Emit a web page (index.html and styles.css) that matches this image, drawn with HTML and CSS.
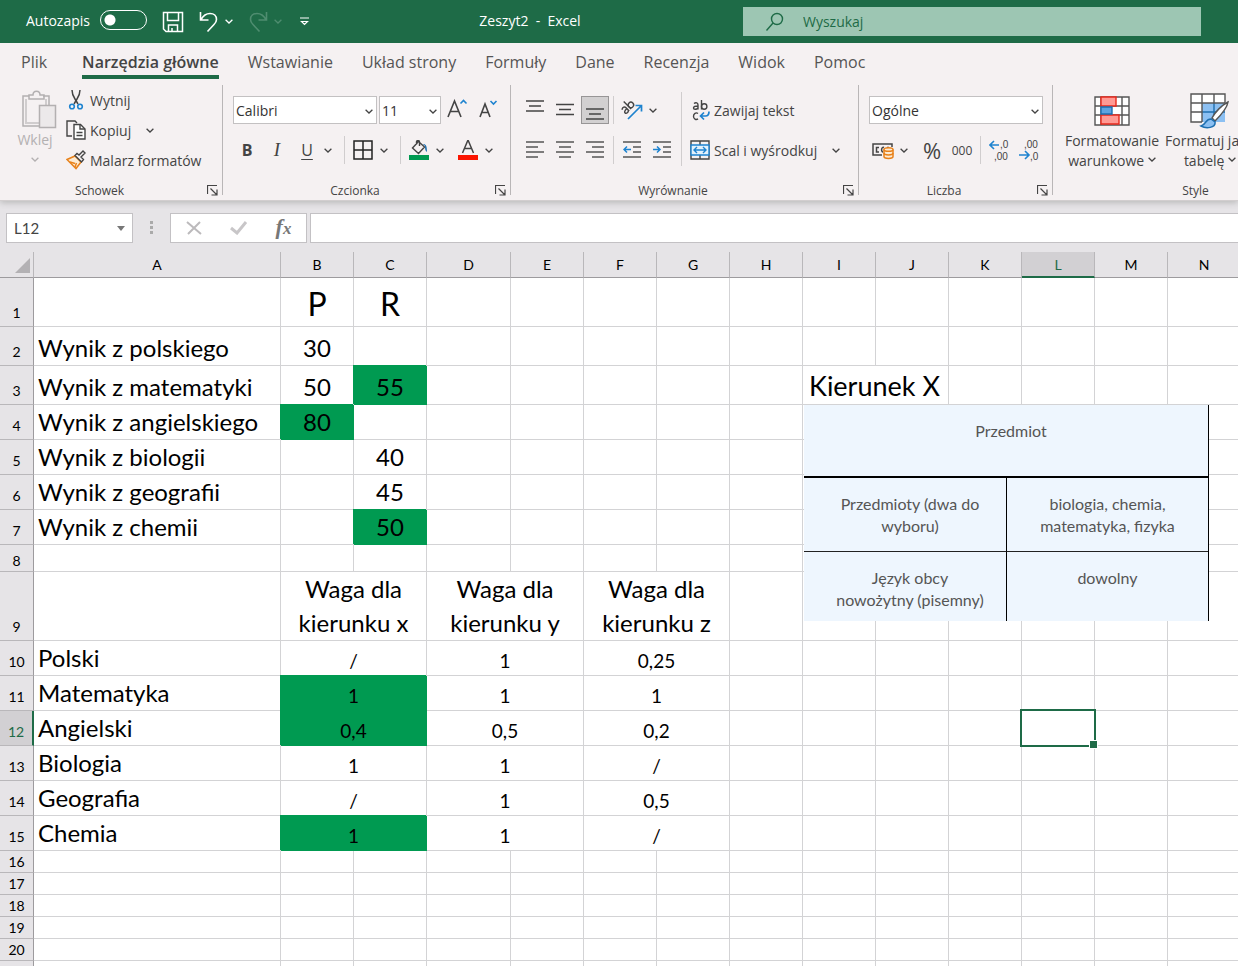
FILE: index.html
```html
<!DOCTYPE html>
<html lang="pl">
<head>
	<meta charset="UTF-8">
	<meta name="viewport" content="width=device-width, initial-scale=1.0">
	<title>Zeszyt2 - Excel</title>
	<link rel="stylesheet" href="styles.css">
</head>
<body>
	<svg class="symbols" aria-hidden="true">
		<symbol id="chevron" viewBox="0 0 8 5"><path d="M.6.8 4 4 7.4.8" fill="none" stroke="currentColor" stroke-width="1.3"/></symbol>
		<symbol id="launcher" viewBox="0 0 11 11"><path d="M.5 9V.5H10M3.5 3.5l6 6M10 4.500V10H4.500" fill="none" stroke="currentColor" stroke-width="1.2"/></symbol>
	</svg>

	<header class="titlebar">
		<div class="quick">
			<label class="autosave">Autozapis <input type="checkbox" class="autosave__switch"></label>
			<button class="quick__btn quick__btn--save" aria-label="Zapisz">
				<svg width="22" height="22" viewBox="0 0 22 22" fill="none" stroke="currentColor" stroke-width="1.5"><path d="M1.500 1.500h19v19H4l-2.500-2.500zM5.500 1.500v8h11v-8M6.500 20v-6h9v6M10 20v-3"/></svg>
			</button>
			<button class="quick__btn" aria-label="Cofnij">
				<svg width="20" height="22" viewBox="0 0 20 22" fill="none" stroke="currentColor" stroke-width="1.600"><path d="M1.500 1v8h8M2 8.500C4 5 7 2.500 11 2.500c4 0 6.500 2.500 6.500 6 0 2.500-1 3.500-2.500 5L8.500 20.500"/></svg>
			</button>
			<button class="chev" aria-label="Lista cofania"><svg><use href="#chevron"/></svg></button>
			<button class="quick__btn quick__btn--off" aria-label="Wykonaj ponownie">
				<svg width="20" height="22" viewBox="0 0 20 22" fill="none" stroke="currentColor" stroke-width="1.600"><path d="M18.500 1v8h-8M18 8.500C16 5 13 2.500 9 2.500c-4 0-6.500 2.500-6.500 6 0 2.500 1 3.500 2.500 5l6.500 7"/></svg>
			</button>
			<button class="chev quick__btn--off" aria-label="Lista ponawiania"><svg><use href="#chevron"/></svg></button>
			<button class="quick__more" aria-label="Dostosuj pasek">
				<svg width="9" height="9" viewBox="0 0 9 9" fill="none" stroke="currentColor" stroke-width="1.200"><path d="M0 1h9M1.500 4.500h6L4.500 7.500z"/></svg>
			</button>
		</div>
		<div class="titlebar__name">Zeszyt2&nbsp; -&nbsp; Excel</div>
		<label class="search">
			<svg width="20" height="20" viewBox="0 0 20 20" fill="none" stroke="currentColor" stroke-width="1.400"><circle cx="12" cy="7" r="5.500"/><path d="M8 11 1.500 18.500"/></svg>
			<input type="text" placeholder="Wyszukaj" aria-label="Wyszukaj">
		</label>
	</header>

	<nav class="tabs">
		<a href="#" class="tab tab--file">Plik</a>
		<a href="#" class="tab tab--active">Narzędzia główne</a>
		<a href="#" class="tab">Wstawianie</a>
		<a href="#" class="tab">Układ strony</a>
		<a href="#" class="tab">Formuły</a>
		<a href="#" class="tab">Dane</a>
		<a href="#" class="tab">Recenzja</a>
		<a href="#" class="tab">Widok</a>
		<a href="#" class="tab">Pomoc</a>
	</nav>

	<div class="ribbon">
		<section class="group group--clipboard">
			<div class="group__body group__body--clipboard">
				<button class="paste">
					<svg class="paste__icon" width="36" height="40" viewBox="0 0 36 40" fill="none" stroke="#b3b0b1" stroke-width="1.500"><path d="M8 6H2v30h16M22 6h6v9"/><path d="M5 9v24h13M25 9v6" stroke="#d0cdce" stroke-width="2"/><path d="M8 9V5h4c0-5 7-5 7 0h4v4z"/><path d="M18.500 15.500h16v22h-16z" fill="#ece9ea"/></svg>
					<span>Wklej</span>
					<svg class="paste__chev"><use href="#chevron"/></svg>
				</button>
				<div class="clipboard">
					<button class="cmd">
						<svg width="20" height="20" viewBox="0 0 20 20" fill="none"><path d="M6 0c0 4 1 6 3 9l3 5M14 0c0 4-1 6-3 9l-3 5" stroke="#444" stroke-width="1.500"/><circle cx="6" cy="16.500" r="2.300" stroke="#1e83cf" stroke-width="1.600"/><circle cx="14" cy="16.500" r="2.300" stroke="#1e83cf" stroke-width="1.600"/></svg>
						Wytnij
					</button>
					<span class="cmdrow">
						<button class="cmd">
							<svg width="20" height="20" viewBox="0 0 20 20" fill="none" stroke="#444" stroke-width="1.400"><path d="M6 16H1V1h8l2 2"/><path d="M8 4.500h6.500l4.500 4.500v10H8z" fill="#fff"/><path d="M14 4.500V9h5M10.500 12.500h6M10.500 15.500h6"/></svg>
							Kopiuj
						</button>
						<button class="chev" aria-label="Opcje kopiowania"><svg><use href="#chevron"/></svg></button>
					</span>
					<button class="cmd">
						<svg width="20" height="20" viewBox="0 0 20 20" fill="none"><path d="M1 9.500 9 6l6 6-5 6.500z" fill="#fdebd3" stroke="#e8811a" stroke-width="1.500"/><path d="m4 12 5 1.500M9 17l1.500-4" stroke="#e8811a" stroke-width="1.500"/><path d="m9 5.500 6.500 6.500 2-2.500-2.500-2.500 4-4L17 1l-4 4-2-1.500z" fill="#f5f1f2" stroke="#444" stroke-width="1.400"/></svg>
						Malarz formatów
					</button>
				</div>
			</div>
			<div class="group__foot"><span>Schowek</span><button class="launch" aria-label="Okno Schowek"><svg><use href="#launcher"/></svg></button></div>
		</section>

		<section class="group group--font">
			<div class="group__body">
				<div class="row">
					<span class="combo combo--font"><select aria-label="Czcionka"><option>Calibri</option></select><svg><use href="#chevron"/></svg></span>
					<span class="combo combo--size"><select aria-label="Rozmiar czcionki"><option>11</option></select><svg><use href="#chevron"/></svg></span>
					<button class="btn" aria-label="Zwiększ rozmiar"><svg width="22" height="22" viewBox="0 0 22 22" fill="none" stroke="#444" stroke-width="1.600"><path d="M2 18 8.500 2 15 18M4.500 12.500h8"/><path d="m14.500 4.500 3-3 3 3" stroke="#1e83cf"/></svg></button>
					<button class="btn" aria-label="Zmniejsz rozmiar"><svg width="22" height="22" viewBox="0 0 22 22" fill="none" stroke="#444" stroke-width="1.600"><path d="M4 18 9 5l5 13M6 13.500h6"/><path d="m14.500 2 3 3 3-3" stroke="#1e83cf"/></svg></button>
				</div>
				<div class="row">
					<button class="btn btn--b">B</button>
					<button class="btn btn--i">I</button>
					<span class="split"><button class="btn btn--u">U</button><button class="chev" aria-label="Podkreślenie"><svg><use href="#chevron"/></svg></button></span>
					<i class="sep"></i>
					<span class="split"><button class="btn" aria-label="Obramowanie"><svg width="20" height="20" viewBox="0 0 20 20" fill="none" stroke="#222" stroke-width="1.500"><path d="M1 1h18v18H1zM10 1v18M1 10h18"/></svg></button><button class="chev" aria-label="Rodzaj obramowania"><svg><use href="#chevron"/></svg></button></span>
					<i class="sep"></i>
					<span class="split"><button class="btn" aria-label="Kolor wypełnienia"><svg width="20" height="20" viewBox="0 0 20 20" fill="none"><path d="m9.500 1.500 6 5.500-6 6.500-6-5.500zM7.500 4.500V2c0-2 3-2 3 0v4" stroke="#444" stroke-width="1.400"/><path d="M14 4c3 0 4 2 4 8-2-1-2-4-2-6z" fill="#1e6fb0"/><path d="M0 15h20v5H0z" fill="#009a51"/></svg></button><button class="chev" aria-label="Lista kolorów wypełnienia"><svg><use href="#chevron"/></svg></button></span>
					<span class="split"><button class="btn" aria-label="Kolor czcionki"><svg width="20" height="20" viewBox="0 0 20 20" fill="none"><path d="M4.500 13 10 0l5.500 13M6.500 8.500h7" stroke="#444" stroke-width="1.500"/><path d="M0 15h20v5H0z" fill="#fb1400"/></svg></button><button class="chev" aria-label="Lista kolorów czcionki"><svg><use href="#chevron"/></svg></button></span>
				</div>
			</div>
			<div class="group__foot"><span>Czcionka</span><button class="launch" aria-label="Okno Czcionka"><svg><use href="#launcher"/></svg></button></div>
		</section>

		<section class="group group--align">
			<div class="group__body group__body--cols">
				<div class="col">
					<div class="row">
						<button class="btn" aria-label="Do góry"><svg width="18" height="20" viewBox="0 0 18 20" stroke="#444" stroke-width="1.500"><path d="M0 1h18M3 6h12M0 11h18"/></svg></button>
						<button class="btn" aria-label="Do środka"><svg width="18" height="20" viewBox="0 0 18 20" stroke="#444" stroke-width="1.500"><path d="M0 4.500h18M3 9.500h12M0 14.500h18"/></svg></button>
						<button class="btn btn--on" aria-label="Do dołu"><svg width="18" height="20" viewBox="0 0 18 20" stroke="#444" stroke-width="1.500"><path d="M0 9h18M3 14h12M0 19h18"/></svg></button>
						<i class="sep"></i>
						<span class="split"><button class="btn" aria-label="Orientacja"><svg width="22" height="22" viewBox="0 0 22 22" fill="none"><g transform="rotate(-45 8 10)" stroke="#444" stroke-width="1.400"><path d="M2.500 5.500C5 4 6.800 5 6.800 7v4.500M6.800 8C4 8 2.500 8.500 2.500 10s3 2.500 4.300 0M9.500 1v10.500"/><circle cx="12.200" cy="8.500" r="2.700"/></g><path d="M7 20 20 7M14.500 6.500H20.500V12.500" stroke="#1e83cf" stroke-width="1.700"/></svg></button><button class="chev" aria-label="Lista orientacji"><svg><use href="#chevron"/></svg></button></span>
					</div>
					<div class="row">
						<button class="btn" aria-label="Do lewej"><svg width="18" height="20" viewBox="0 0 18 20" stroke="#555" stroke-width="1.500"><path d="M0 2h18M0 7h12M0 12h18M0 17h12"/></svg></button>
						<button class="btn" aria-label="Wyśrodkuj"><svg width="18" height="20" viewBox="0 0 18 20" stroke="#555" stroke-width="1.500"><path d="M0 2h18M3 7h12M0 12h18M3 17h12"/></svg></button>
						<button class="btn" aria-label="Do prawej"><svg width="18" height="20" viewBox="0 0 18 20" stroke="#555" stroke-width="1.500"><path d="M0 2h18M6 7h12M0 12h18M6 17h12"/></svg></button>
						<i class="sep"></i>
						<button class="btn" aria-label="Zmniejsz wcięcie"><svg width="18" height="20" viewBox="0 0 18 20" fill="none" stroke="#555" stroke-width="1.500"><path d="M0 2h18M10 7h8M10 12h8M0 17h18"/><path d="M8 9.500H1M4 6.500l-3 3 3 3" stroke="#1e83cf"/></svg></button>
						<button class="btn" aria-label="Zwiększ wcięcie"><svg width="18" height="20" viewBox="0 0 18 20" fill="none" stroke="#555" stroke-width="1.500"><path d="M0 2h18M10 7h8M10 12h8M0 17h18"/><path d="M0 9.500h7M4 6.500l3 3-3 3" stroke="#1e83cf"/></svg></button>
					</div>
				</div>
				<i class="sep sep--tall"></i>
				<div class="col">
					<div class="row">
						<button class="cmd">
							<svg width="20" height="22" viewBox="0 0 20 22" fill="none" stroke="#444" stroke-width="1.400"><path d="M4 4.500c2-1.500 4-.5 4 1.500v4.500M8 7c-3 0-4.500.5-4.500 2S6.500 11 8 9M11.500 1v9.500"/><circle cx="14.200" cy="7.500" r="2.700"/><path d="M8 14.500c-2-1.500-4.500 0-4.500 2.700s2.500 4.200 4.500 2.700"/><path d="M19 12.500c0 3-1 4.500-3.500 4.500H11M14 13.500 10.500 17l3.500 3.500" stroke="#1e83cf" stroke-width="1.700"/></svg>
							Zawijaj tekst
						</button>
					</div>
					<div class="row">
						<button class="cmd">
							<svg width="20" height="20" viewBox="0 0 20 20" fill="none" stroke="#444" stroke-width="1.400"><path d="M1 1h18v18H1zM10 1v4M10 15v4"/><path d="M1 5h18v10H1z" fill="#e3f1fc" stroke="#1e83cf"/><path d="M4 10h12M7 7l-3 3 3 3M13 7l3 3-3 3" stroke="#1e83cf"/></svg>
							Scal i wyśrodkuj
						</button>
						<button class="chev chev--merge" aria-label="Opcje scalania"><svg><use href="#chevron"/></svg></button>
					</div>
				</div>
			</div>
			<div class="group__foot"><span>Wyrównanie</span><button class="launch" aria-label="Okno Wyrównanie"><svg><use href="#launcher"/></svg></button></div>
		</section>

		<section class="group group--number">
			<div class="group__body">
				<div class="row">
					<span class="combo combo--number"><select aria-label="Format liczb"><option>Ogólne</option></select><svg><use href="#chevron"/></svg></span>
				</div>
				<div class="row">
					<span class="split"><button class="btn" aria-label="Format księgowy"><svg width="22" height="20" viewBox="0 0 22 20" fill="none" stroke="#444" stroke-width="1.500"><path d="M10 15H1V4h19v3"/><path d="M7 7.500H4.500v4.500H7M12 7.500c-3-1-3 4.500-1 4.500M15 7.500h2"/><path d="M12 9.500v7c0 2.500 9 2.500 9 0v-7" fill="#fdebd3" stroke="#e8811a"/><ellipse cx="16.500" cy="9.500" rx="4.500" ry="1.800" fill="#fdebd3" stroke="#e8811a"/><path d="M12 13c0 2.500 9 2.500 9 0" stroke="#e8811a"/></svg></button><button class="chev" aria-label="Lista walut"><svg><use href="#chevron"/></svg></button></span>
					<button class="btn btn--percent">%</button>
					<button class="btn btn--thousand">000</button>
					<i class="sep"></i>
					<button class="btn btn--dec" aria-label="Zwiększ dziesiętne"><svg width="20" height="24" viewBox="0 0 20 24"><path d="M10 7H1M5 3 1 7l4 4" fill="none" stroke="#1e83cf" stroke-width="1.600"/><text x="11" y="10">,0</text><text x="5" y="22">,00</text></svg></button>
					<button class="btn btn--dec" aria-label="Zmniejsz dziesiętne"><svg width="20" height="24" viewBox="0 0 20 24"><path d="M0 17h10M6 13l4 4-4 4" fill="none" stroke="#1e83cf" stroke-width="1.600"/><text x="5" y="10">,00</text><text x="11" y="22">,0</text></svg></button>
				</div>
			</div>
			<div class="group__foot"><span>Liczba</span><button class="launch" aria-label="Okno Liczba"><svg><use href="#launcher"/></svg></button></div>
		</section>

		<section class="group group--styles">
			<div class="group__body group__body--big">
				<button class="big">
					<svg width="36" height="30" viewBox="0 0 36 30" fill="none" stroke="#555" stroke-width="1.400"><path d="M1 1h34v28H1zM1 10h34M1 19h34M7 1v28M28 1v28" fill="#fff"/><path d="M7 1h15v9H7zM7 19h18v9H7z" fill="#ff9a94" stroke="#e8281c"/><path d="M7 11h11v7H7z" fill="#5ea3e0" stroke="#1e6fb0"/></svg>
					<span>Formatowanie<br>warunkowe <svg><use href="#chevron"/></svg></span>
				</button>
				<button class="big">
					<svg width="40" height="36" viewBox="0 0 40 36" fill="none"><path d="M1 1h34v28H1z" fill="#fff"/><path d="M12 10h23v19H12z" fill="#8cc0f2"/><path d="M12 19h23M24 10v19" stroke="#1e6fb0" stroke-width="1.400"/><path d="M1 1h34v9H1zM1 19h11M12 1v28M24 1v9M1 10v19h11" stroke="#555" stroke-width="1.400"/><path d="M38 9c-6 3-13 10-16 16l3 3c5-5 12-12 13-19z" fill="#fff" stroke="#555" stroke-width="1.500"/><path d="M21 26c-6 0-4 5-10 7 5 3 15 2 14-4z" fill="#8cc0f2" stroke="#1e6fb0" stroke-width="1.500"/></svg>
					<span>Formatuj jako<br>tabelę <svg><use href="#chevron"/></svg></span>
				</button>
			</div>
			<div class="group__foot"><span>Style</span></div>
		</section>
	</div>

	<div class="formula">
		<span class="namebox"><input type="text" value="L12" aria-label="Pole nazwy"><svg width="8" height="5" viewBox="0 0 8 5"><path d="M0 0h8L4 5z" fill="#777"/></svg></span>
		<svg class="formula__dots" width="3" height="14" viewBox="0 0 3 14" fill="#aaa"><path d="M0 0h3v3H0zM0 5h3v3H0zM0 10h3v3H0z"/></svg>
		<div class="formula__btns">
			<button aria-label="Anuluj"><svg width="16" height="14" viewBox="0 0 16 14" fill="none" stroke="#bcbabc" stroke-width="2"><path d="m1 1 14 12M14 1 2 13"/></svg></button>
			<button aria-label="Wpis"><svg width="18" height="14" viewBox="0 0 18 14" fill="none" stroke="#c8c6c8" stroke-width="3"><path d="m1 7 6 5L16 1"/></svg></button>
			<button class="fx" aria-label="Wstaw funkcję">f<small>x</small></button>
		</div>
		<input type="text" class="formula__input" aria-label="Pasek formuły">
	</div>

	<main class="sheet">
		<table class="grid" id="grid"></table>
		<table class="subjects">
			<tr><td colspan="2">Przedmiot</td></tr>
			<tr><td>Przedmioty (dwa do<br>wyboru)</td><td>biologia, chemia,<br>matematyka, fizyka</td></tr>
			<tr><td>Język obcy<br>nowożytny (pisemny)</td><td>dowolny</td></tr>
		</table>
	</main>
	<script src="script.js"></script>
</body>
</html>
```

FILE: styles.css
```css
*{
	box-sizing: border-box;
}
body{
	margin: 0;
	height: 100vh;
	overflow: hidden;
	display: flex;
	flex-direction: column;
	background: #e6e4e7;
	color: #444;
	font-family: "Open Sans", "Noto Sans", sans-serif;
	font-size: 14px;
}
button,
input,
select{
	font: inherit;
	color: inherit;
	margin: 0;
	padding: 0;
	border: 0;
	background: none;
}
svg{
	flex: none;
}
.symbols{
	position: absolute;
	width: 0;
	height: 0;
}

/* title bar */
.titlebar{
	display: flex;
	align-items: center;
	flex: none;
	height: 43px;
	background: #1e6b47;
	color: #fff;
}
.quick{
	display: flex;
	align-items: center;
	flex: none;
	width: 317px;
	padding-left: 26px;
}
.autosave{
	display: flex;
	align-items: center;
	gap: 10px;
	height: 40px;
	margin-bottom: 3px;
}
.autosave__switch{
	appearance: none;
	width: 47px;
	height: 20px;
	border: 1px solid #fff;
	border-radius: 10px;
	background: radial-gradient(circle at 9px 9px, #fff 5px, transparent 6px);
}
.quick__btn{
	display: flex;
	margin-left: 15px;
}
.quick__btn--off{
	color: #4f8d70;
}
.quick .chev{
	width: 20px;
}
.quick__btn + .chev{
	margin-right: -6px;
}
.quick__more{
	display: flex;
	margin-left: 18px;
}
.titlebar__name{
	flex: 1;
	text-align: center;
	margin-bottom: 3px;
}
.search{
	display: flex;
	align-items: center;
	gap: 18px;
	width: 37%;
	height: 29px;
	margin-right: 37px;
	padding-left: 22px;
	background: #9dc6b3;
	color: #1e6b47;
}
.search input{
	flex: 1;
	min-width: 0;
}
.search input::placeholder{
	color: #1e6b47;
	opacity: 1;
}

/* tabs */
.tabs{
	display: flex;
	flex: none;
	gap: 29px;
	height: 42px;
	padding: 3px 21px 0;
	background: #f5f1f2;
	font-size: 16px;
}
.tab{
	height: 33px;
	line-height: 32px;
	color: #555;
	text-decoration: none;
	white-space: nowrap;
}
.tab--file{
	margin-right: 6px;
}
.tab--active{
	border-bottom: 4px solid #1e6b47;
	color: #444;
	font-weight: 600;
}

/* ribbon */
.ribbon{
	display: flex;
	flex: none;
	height: 116px;
	overflow: hidden;
	background: #f5f1f2;
	border-bottom: 1px solid #d2cecf;
	box-shadow: 0 2px 6px #bbb;
	clip-path: inset(0 0 -8px 0);
}
.group{
	display: flex;
	flex-direction: column;
	flex: none;
	height: 110px;
	border-right: 1px solid #b9b6b7;
}
.group--clipboard{
	width: 223px;
}
.group--font{
	width: 288px;
}
.group--align{
	width: 348px;
}
.group--number{
	width: 194px;
}
.group--styles{
	width: 286px;
}
.group__body{
	display: flex;
	flex-direction: column;
	gap: 12px;
	flex: 1;
	padding: 11px 0 0 10px;
}
.group__body--clipboard{
	flex-direction: row;
	gap: 10px;
	padding: 0 0 0 14px;
}
.group__body--cols{
	flex-direction: row;
	gap: 0;
}
.group__body--big{
	flex-direction: row;
	gap: 0;
	padding-top: 8px;
}
.group__foot{
	display: flex;
	align-items: center;
	height: 20px;
	margin-bottom: -5px;
	font-size: 12px;
}
.group__foot span{
	flex: 1;
	text-align: center;
}
.launch{
	display: flex;
	width: 23px;
	padding-left: 8px;
}
.launch svg{
	width: 11px;
	height: 11px;
}
.col{
	display: flex;
	flex-direction: column;
	gap: 12px;
}
.row{
	display: flex;
	align-items: center;
	gap: 2px;
	height: 28px;
}
.sep{
	width: 1px;
	height: 28px;
	margin: 0 2px;
	background: #d0cdce;
}
.sep--tall{
	height: 74px;
	margin: -4px 8px 0 5px;
}
.btn{
	display: flex;
	align-items: center;
	justify-content: center;
	width: 28px;
	height: 28px;
}
.btn--on{
	background: #d2d0d1;
	border: 1px solid #979596;
}
.btn--b{
	font-size: 16px;
	font-weight: 700;
}
.btn--i{
	font-family: "Liberation Serif", serif;
	font-size: 19px;
	font-style: italic;
}
.btn--u{
	font-size: 16px;
	text-decoration: underline;
	text-underline-offset: 3px;
}
.btn--percent{
	font-size: 22px;
}
.btn--thousand{
	font-size: 12px;
}
.btn--dec text{
	font-family: "Liberation Sans", sans-serif;
	font-size: 10px;
	fill: #444;
}
.split{
	display: flex;
	margin-right: 5px;
}
.chev{
	display: flex;
	align-items: center;
	justify-content: center;
	width: 14px;
}
.chev svg,
.combo svg,
.paste .paste__chev,
.big span svg{
	width: 8px;
	height: 5px;
}
.chev--merge{
	margin-left: 10px;
}
.combo{
	position: relative;
	height: 28px;
	border: 1px solid #c3c1c2;
	background: #fff;
}
.combo select{
	appearance: none;
	width: 100%;
	height: 26px;
	padding-left: 2px;
	color: #333;
}
.combo svg{
	position: absolute;
	right: 3px;
	top: 12px;
	pointer-events: none;
}
.combo--font{
	width: 144px;
}
.combo--size{
	width: 62px;
}
.combo--number{
	width: 174px;
}
.paste{
	display: flex;
	flex-direction: column;
	align-items: center;
	width: 42px;
	padding-top: 5px;
	color: #b3b0b1;
	line-height: 20px;
}
.paste__icon{
	margin-left: 8px;
}
.paste__chev{
	margin-top: 7px;
}
.clipboard{
	display: flex;
	flex-direction: column;
	align-items: flex-start;
}
.cmdrow{
	display: flex;
	gap: 12px;
}
.cmd{
	display: flex;
	align-items: center;
	gap: 4px;
	height: 30px;
	white-space: nowrap;
}
.big{
	display: flex;
	flex-direction: column;
	align-items: center;
	width: 98px;
	height: 80px;
	line-height: 20px;
	white-space: nowrap;
}
.big > svg{
	height: 36px;
	margin-bottom: 2px;
}
.big span svg{
	vertical-align: 4px;
}

/* formula bar */
.formula{
	display: flex;
	align-items: center;
	flex: none;
	height: 51px;
	padding: 3px 0 0 6px;
}
.namebox{
	display: flex;
	align-items: center;
	width: 127px;
	height: 30px;
	padding: 0 7px;
	border: 1px solid #c3c1c4;
	background: #fff;
	font-family: Lato, sans-serif;
	font-size: 15px;
}
.namebox input{
	flex: 1;
	min-width: 0;
}
.formula__dots{
	margin: 0 17px;
}
.formula__btns{
	display: flex;
	width: 137px;
	height: 30px;
	border: 1px solid #c3c1c4;
	background: #fff;
}
.formula__btns button{
	display: flex;
	flex: 1;
	align-items: center;
	justify-content: center;
}
.formula__btns .fx{
	align-items: baseline;
	font: italic 700 22px "Liberation Serif", serif;
	color: #777;
}
.fx small{
	font-size: 17px;
}
.formula__input{
	flex: 1;
	min-width: 0;
	height: 30px;
	margin-left: 3px;
	border: 1px solid #c3c1c4;
	border-right: 0;
	background: #fff;
}

/* sheet */
.sheet{
	position: relative;
	flex: 1;
	min-height: 0;
	overflow: hidden;
	color: #000;
	font-family: Lato, "Open Sans", sans-serif;
}
.grid{
	table-layout: fixed;
	width: 1241px;
	border-spacing: 0;
	background: #fff;
}
.grid td,
.grid th{
	padding: 0;
	border-right: 1px solid #d3d3d5;
	border-bottom: 1px solid #d3d3d5;
	vertical-align: bottom;
	white-space: nowrap;
}
.grid th{
	background: #e6e4e7;
	border-color: #b9b7ba;
	font-size: 14px;
	font-weight: 400;
	line-height: 21px;
}
.grid .tall{
	line-height: 26px;
}
.grid thead th{
	height: 26px;
	border-bottom-color: #9d9b9e;
	line-height: 24px;
}
.grid tbody th{
	border-right-color: #9d9b9e;
}
.corner svg{
	display: block;
	margin: 0 3px 4px auto;
}
.grid thead .current{
	background: #d2d0d3;
	border-bottom: 2px solid #1e6b47;
	color: #1e6b47;
	line-height: 22px;
}
.grid tbody .current{
	background: #d2d0d3;
	border-right: 2px solid #1e6b47;
	color: #1e6b47;
}
.grid td{
	font-size: 24px;
	line-height: 34px;
	text-align: center;
}
.grid .text{
	padding-left: 4px;
	text-align: left;
}
.grid .head{
	font-size: 32px;
	line-height: 44px;
}
.grid .title{
	padding-left: 6px;
	font-size: 27px;
	line-height: 36px;
	text-align: left;
}
.grid .weight{
	font-size: 19px;
	line-height: 28px;
}
.grid .green{
	border-color: #009a51;
	background: #009a51;
	box-shadow: -1px -1px 0 #009a51;
}
.grid .selected{
	position: relative;
}
.selected::before{
	content: "";
	position: absolute;
	inset: -2px;
	border: 2px solid #1e6b47;
}
.selected::after{
	content: "";
	position: absolute;
	right: -4px;
	bottom: -4px;
	width: 7px;
	height: 7px;
	border: 1px solid #fff;
	background: #1e6b47;
}

/* picture laid over the cells */
.subjects{
	position: absolute;
	left: 804px;
	top: 153px;
	width: 405px;
	table-layout: fixed;
	border-spacing: 0;
	border-right: 1px solid #000;
	background: #eef6fe;
	color: #555;
	font-size: 16px;
	line-height: 22px;
	text-align: center;
}
.subjects td{
	height: 74px;
	padding: 15px 0 0;
	border-bottom: 1px solid #222;
	vertical-align: top;
}
.subjects td:first-child{
	padding-left: 10px;
}
.subjects tr:first-child td{
	height: 73px;
	border-bottom: 2px solid #000;
}
.subjects tr:last-child td{
	height: 69px;
	border-bottom: 0;
}
.subjects td + td{
	border-left: 1px solid #000;
}
```

FILE: script.js
```js
var grid = document.getElementById('grid');
var widths = [34, 247, 73, 73, 84, 73, 73, 73, 73, 73, 73, 73, 73, 73, 73];
var letters = 'ABCDEFGHIJKLMN'.split('');

// cell: [column, text, classes, colspan]
var rows = [
	{h: 49, cells: [['B', 'P', 'head'], ['C', 'R', 'head']]},
	{h: 39, cells: [['A', 'Wynik z polskiego', 'text'], ['B', '30']]},
	{h: 39, cells: [['A', 'Wynik z matematyki', 'text'], ['B', '50'], ['C', '55', 'green'], ['I', 'Kierunek X', 'title', 2]]},
	{h: 35, cells: [['A', 'Wynik z angielskiego', 'text'], ['B', '80', 'green']]},
	{h: 35, cells: [['A', 'Wynik z biologii', 'text'], ['C', '40']]},
	{h: 35, cells: [['A', 'Wynik z geografii', 'text'], ['C', '45']]},
	{h: 35, cells: [['A', 'Wynik z chemii', 'text'], ['C', '50', 'green']]},
	{h: 27, cells: []},
	{h: 69, cells: [['B', 'Waga dla<br>kierunku x', '', 2], ['D', 'Waga dla<br>kierunku y', '', 2], ['F', 'Waga dla<br>kierunku z', '', 2]]},
	weights('Polski', '/', '1', '0,25'),
	weights('Matematyka', '1', '1', '1', true),
	weights('Angielski', '0,4', '0,5', '0,2', true),
	weights('Biologia', '1', '1', '/'),
	weights('Geografia', '/', '1', '0,5'),
	weights('Chemia', '1', '1', '/', true)
];
while(rows.length < 21){
	rows.push({h: 22, cells: []});
}
rows[11].cells.push(['L', '', 'selected']);

function weights(name, x, y, z, green){
	return {h: 35, cells: [
		['A', name, 'text'],
		['B', x, green ? 'weight green' : 'weight', 2],
		['D', y, 'weight', 2],
		['F', z, 'weight', 2]
	]};
}

function buildRow(row, index){
	var name = (row.h > 30 ? 'tall' : '') + (index == 11 ? ' current' : '');
	var html = '<tr style="height:' + row.h + 'px"><th class="' + name + '">' + (index + 1) + '</th>';
	for(var i = 0; i < letters.length; i++){
		var cell = row.cells.find(function(c){ return c[0] == letters[i]; }) || ['', ''];
		var span = cell[3] || 1;
		html += '<td class="' + (cell[2] || '') + '" colspan="' + span + '">' + cell[1] + '</td>';
		i += span - 1;
	}
	return html + '</tr>';
}

var head = '<colgroup>' + widths.map(function(w){ return '<col style="width:' + w + 'px">'; }).join('') + '</colgroup>';
head += '<thead><tr><th class="corner"><svg width="15" height="15"><path d="M15 0v15H0z" fill="#b3b1b4"/></svg></th>';
head += letters.map(function(l){ return '<th class="' + (l == 'L' ? 'current' : '') + '">' + l + '</th>'; }).join('') + '</tr></thead>';
grid.innerHTML = head + '<tbody>' + rows.map(buildRow).join('') + '</tbody>';
```
